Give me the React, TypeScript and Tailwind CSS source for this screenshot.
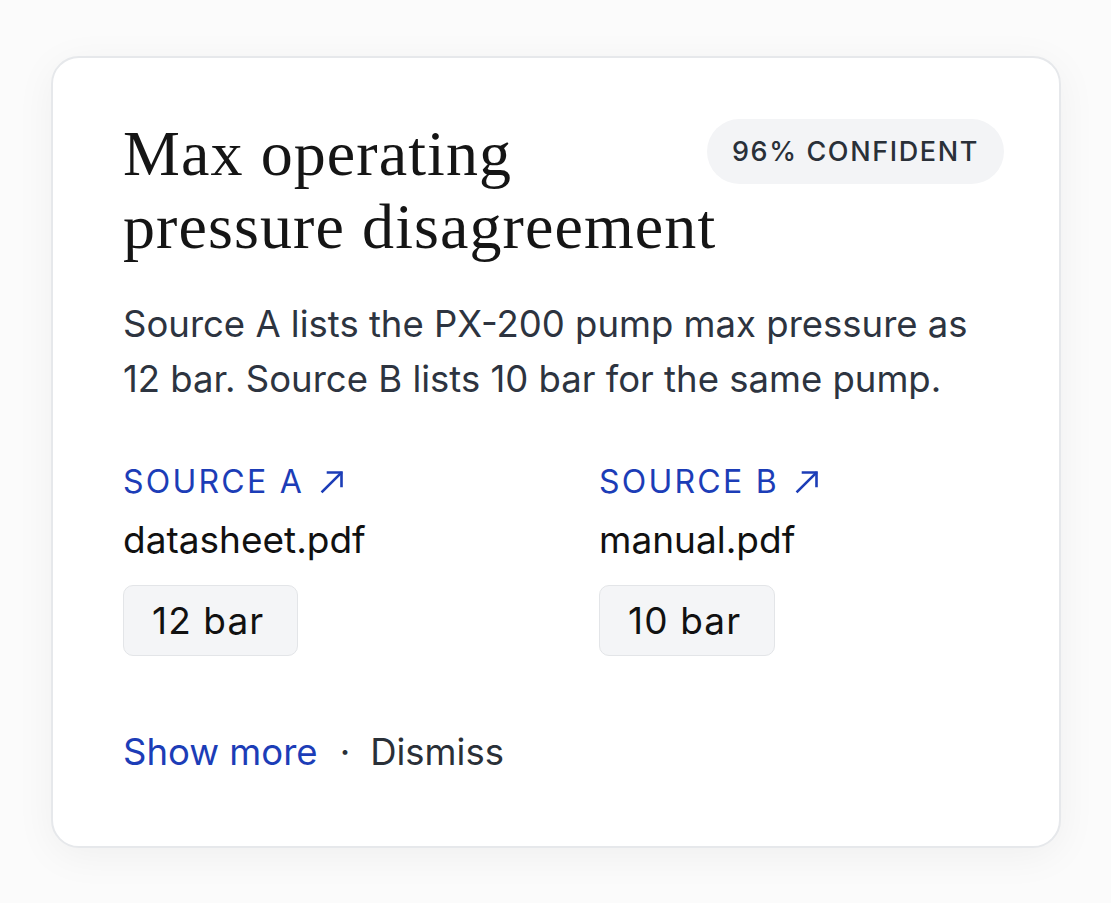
const serif = { fontFamily: '"Liberation Serif", "Times New Roman", serif' };

interface Source {
  label: string;
  file: string;
  value: string;
}

const sources: Source[] = [
  { label: "Source A", file: "datasheet.pdf", value: "12 bar" },
  { label: "Source B", file: "manual.pdf", value: "10 bar" },
];

function ExternalArrow() {
  return (
    <svg viewBox="0 0 24 24" className="w-[24px] h-[24px]" fill="none" stroke="currentColor" strokeWidth={2.6} strokeLinecap="square">
      <path d="M2.5 21.5 L21 3" />
      <path d="M8 2.5 H21.5 V16" strokeLinejoin="miter" />
    </svg>
  );
}

function SourceColumn({ source }: { source: Source }) {
  return (
    <div className="flex flex-col items-start">
      <a className="flex items-center gap-4 text-[32px] uppercase tracking-[0.07em] text-[#1c3db7] leading-[40px]">
        {source.label}
        <ExternalArrow />
      </a>
      <div className="mt-[16px] text-[37px] leading-[44px] text-[#111]">{source.file}</div>
      <div className="mt-[23px] rounded-[10px] border border-[#e3e5e8] bg-[#f4f5f7] pl-[28px] pr-[33px] py-[12px] text-[37px] leading-[45px] tracking-[0.03em] text-[#111]">
        {source.value}
      </div>
    </div>
  );
}

export default function App() {
  return (
    <div className="min-h-screen bg-[#fbfbfb] px-[51px] pt-[56px] font-['Inter',sans-serif]">
      <div className="w-[1010px] h-[792px] rounded-[28px] border-2 border-[#e6e8eb] bg-white pl-[70px] pr-[55px] pt-[59px] shadow-[0_8px_40px_rgba(0,0,0,0.05)]">
        <div className="flex items-start">
          <h1 style={serif} className="flex-1 min-w-0 whitespace-nowrap text-[64px] leading-[73px] text-[#151515] tracking-[0.017em]">
            Max operating
            <br />
            pressure disagreement
          </h1>
          <span className="mt-[2px] shrink-0 rounded-full bg-[#f3f4f6] px-[25px] py-[12px] text-[27px] leading-[41px] font-medium tracking-[0.06em] text-[#2a3038]">
            96% CONFIDENT
          </span>
        </div>

        <p className="mt-[34px] w-[880px] text-[36.5px] leading-[55px] text-[#2d3440]">
          Source A lists the PX-200 pump max pressure as 12 bar. Source B lists 10 bar for the same pump.
        </p>

        <div className="mt-[55px] grid grid-cols-2 gap-x-[72px] w-[880px]">
          {sources.map((s) => (
            <SourceColumn key={s.label} source={s} />
          ))}
        </div>

        <div className="mt-[74px] flex items-center text-[36.5px] leading-[44px]">
          <a className="text-[#1c3db7]">Show more</a>
          <span className="ml-[22px] mr-[20px] text-[#2a3038]">·</span>
          <a className="text-[#2a3038]">Dismiss</a>
        </div>
      </div>
    </div>
  );
}
